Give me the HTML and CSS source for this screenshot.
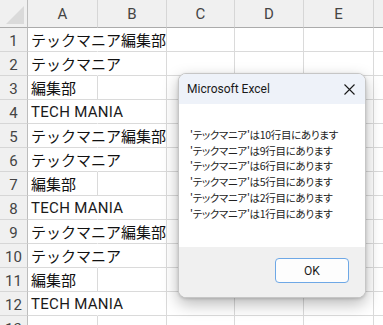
FILE: index.html
```html
<!DOCTYPE html>
<html lang="ja">
<head>
    <meta charset="UTF-8">
    <meta name="viewport" content="width=device-width, initial-scale=1.0">
    <title>Excel - 検索結果</title>
    <link rel="stylesheet" href="styles.css">
</head>
<body>

    <div class="screen">
        <!-- Worksheet -->
        <div class="sheet">
            <div class="corner"></div>
            <div class="col-head">A</div>
            <div class="col-head">B</div>
            <div class="col-head">C</div>
            <div class="col-head">D</div>
            <div class="col-head">E</div>
            <div class="col-head last"></div>

            <div class="row-head">1</div>
            <div class="cell spill">テックマニア編集部</div><div class="cell"></div><div class="cell"></div><div class="cell"></div><div class="cell"></div><div class="cell last"></div>
            <div class="row-head">2</div>
            <div class="cell spill">テックマニア</div><div class="cell"></div><div class="cell"></div><div class="cell"></div><div class="cell"></div><div class="cell last"></div>
            <div class="row-head">3</div>
            <div class="cell">編集部</div><div class="cell"></div><div class="cell"></div><div class="cell"></div><div class="cell"></div><div class="cell last"></div>
            <div class="row-head">4</div>
            <div class="cell spill latin">TECH MANIA</div><div class="cell"></div><div class="cell"></div><div class="cell"></div><div class="cell"></div><div class="cell last"></div>

            <div class="row-head">5</div>
            <div class="cell spill">テックマニア編集部</div><div class="cell"></div><div class="cell"></div><div class="cell"></div><div class="cell"></div><div class="cell last"></div>
            <div class="row-head">6</div>
            <div class="cell spill">テックマニア</div><div class="cell"></div><div class="cell"></div><div class="cell"></div><div class="cell"></div><div class="cell last"></div>
            <div class="row-head">7</div>
            <div class="cell">編集部</div><div class="cell"></div><div class="cell"></div><div class="cell"></div><div class="cell"></div><div class="cell last"></div>
            <div class="row-head">8</div>
            <div class="cell spill latin">TECH MANIA</div><div class="cell"></div><div class="cell"></div><div class="cell"></div><div class="cell"></div><div class="cell last"></div>

            <div class="row-head">9</div>
            <div class="cell spill">テックマニア編集部</div><div class="cell"></div><div class="cell"></div><div class="cell"></div><div class="cell"></div><div class="cell last"></div>
            <div class="row-head">10</div>
            <div class="cell spill">テックマニア</div><div class="cell"></div><div class="cell"></div><div class="cell"></div><div class="cell"></div><div class="cell last"></div>
            <div class="row-head">11</div>
            <div class="cell">編集部</div><div class="cell"></div><div class="cell"></div><div class="cell"></div><div class="cell"></div><div class="cell last"></div>
            <div class="row-head">12</div>
            <div class="cell spill latin">TECH MANIA</div><div class="cell"></div><div class="cell"></div><div class="cell"></div><div class="cell"></div><div class="cell last"></div>

            <div class="row-head">13</div>
            <div class="cell"></div><div class="cell"></div><div class="cell"></div><div class="cell"></div><div class="cell"></div><div class="cell last"></div>
        </div>

        <!-- MsgBox -->
        <div class="msgbox">
            <div class="msgbox-title">
                <span>Microsoft Excel</span>
                <svg class="close-icon" width="11" height="11" viewBox="0 0 11 11">
                    <path d="M0.5 0.5 L10.5 10.5 M10.5 0.5 L0.5 10.5" stroke="#1a1a1a" stroke-width="1.1" fill="none"/>
                </svg>
            </div>
            <div class="msgbox-body">
                <p>'テックマニア'は10行目にあります</p>
                <p>'テックマニア'は9行目にあります</p>
                <p>'テックマニア'は6行目にあります</p>
                <p>'テックマニア'は5行目にあります</p>
                <p>'テックマニア'は2行目にあります</p>
                <p>'テックマニア'は1行目にあります</p>
            </div>
            <div class="msgbox-footer">
                <button class="ok-btn">OK</button>
            </div>
        </div>
    </div>

</body>
</html>
```

FILE: styles.css
```css
body {
    margin: 0;
    padding: 0;
    background-color: #fff;
    font-family: "Noto Sans CJK JP", sans-serif;
    overflow: hidden;
}
.screen {
    position: relative;
    width: 383px;
    height: 325px;
    overflow: hidden;
}

/* Worksheet grid */
.sheet {
    display: grid;
    grid-template-columns: 28px 70px 69px 68px 69px 70px 1fr;
    grid-template-rows: 28px;
    grid-auto-rows: 24px;
}
.sheet > div {
    box-sizing: border-box;
}
.corner {
    background-color: #f0f0f0;
    border-right: 1px solid #bdbdbd;
    border-bottom: 1px solid #ababab;
    position: relative;
}
.corner::after {
    content: "";
    position: absolute;
    right: 3px;
    bottom: 3px;
    width: 0;
    height: 0;
    border-left: 18px solid transparent;
    border-bottom: 18px solid #dadada;
}
.col-head {
    background-color: #f0f0f0;
    border-right: 1px solid #d6d6d6;
    border-bottom: 1px solid #ababab;
    display: flex;
    align-items: center;
    justify-content: center;
    font-family: Roboto, "Noto Sans", sans-serif;
    font-size: 15px;
    color: #444;
}
.row-head {
    background-color: #f0f0f0;
    border-right: 1px solid #bdbdbd;
    border-bottom: 1px solid #d6d6d6;
    display: flex;
    align-items: center;
    justify-content: center;
    font-family: Roboto, "Noto Sans", sans-serif;
    font-size: 15px;
    color: #444;
    padding-top: 2px;
}
.cell {
    border-right: 1px solid #dadada;
    border-bottom: 1px solid #dadada;
    font-size: 15px;
    color: #111;
    white-space: nowrap;
    padding: 1px 0 0 3px;
    line-height: 22px;
}
.cell.latin {
    font-family: Roboto, "Noto Sans CJK JP", sans-serif;
    letter-spacing: 0.3px;
    color: #1a1a1a;
}
.cell.spill {
    border-right-color: transparent;
}
.last {
    border-right: none !important;
}

/* Message box */
.msgbox {
    position: absolute;
    left: 178px;
    top: 73px;
    width: 188px;
    height: 225px;
    box-sizing: border-box;
    border: 1px solid #c6c6c6;
    border-radius: 8px;
    background-color: #fff;
    overflow: hidden;
    display: flex;
    flex-direction: column;
    box-shadow: 0 6px 16px rgba(0, 0, 0, 0.28), 0 1px 3px rgba(0, 0, 0, 0.15);
}
.msgbox-title {
    height: 30px;
    background-color: #eef2f9;
    display: flex;
    align-items: center;
    justify-content: space-between;
    padding: 0 10px 0 8px;
    font-family: Roboto, "Noto Sans", sans-serif;
    font-size: 12px;
    color: #1a1a1a;
}
.close-icon {
    display: block;
}
.msgbox-body {
    flex: 1;
    padding: 23px 0 0 11px;
    font-size: 10.5px;
    letter-spacing: -0.3px;
    line-height: 15.7px;
    color: #222;
    font-feature-settings: "palt";
}
.msgbox-body p {
    margin: 0;
    white-space: nowrap;
}
.msgbox-footer {
    height: 50px;
    background-color: #f0f0f0;
    display: flex;
    justify-content: flex-end;
    align-items: flex-start;
    padding: 11px 16px 0 0;
    box-sizing: border-box;
}
.ok-btn {
    width: 74px;
    height: 25px;
    background-color: #fdfdfd;
    border: 1px solid #6ea8e6;
    border-radius: 4px;
    font-family: Roboto, "Noto Sans", sans-serif;
    font-size: 12px;
    color: #1a1a1a;
    padding: 0;
    cursor: pointer;
}
```
